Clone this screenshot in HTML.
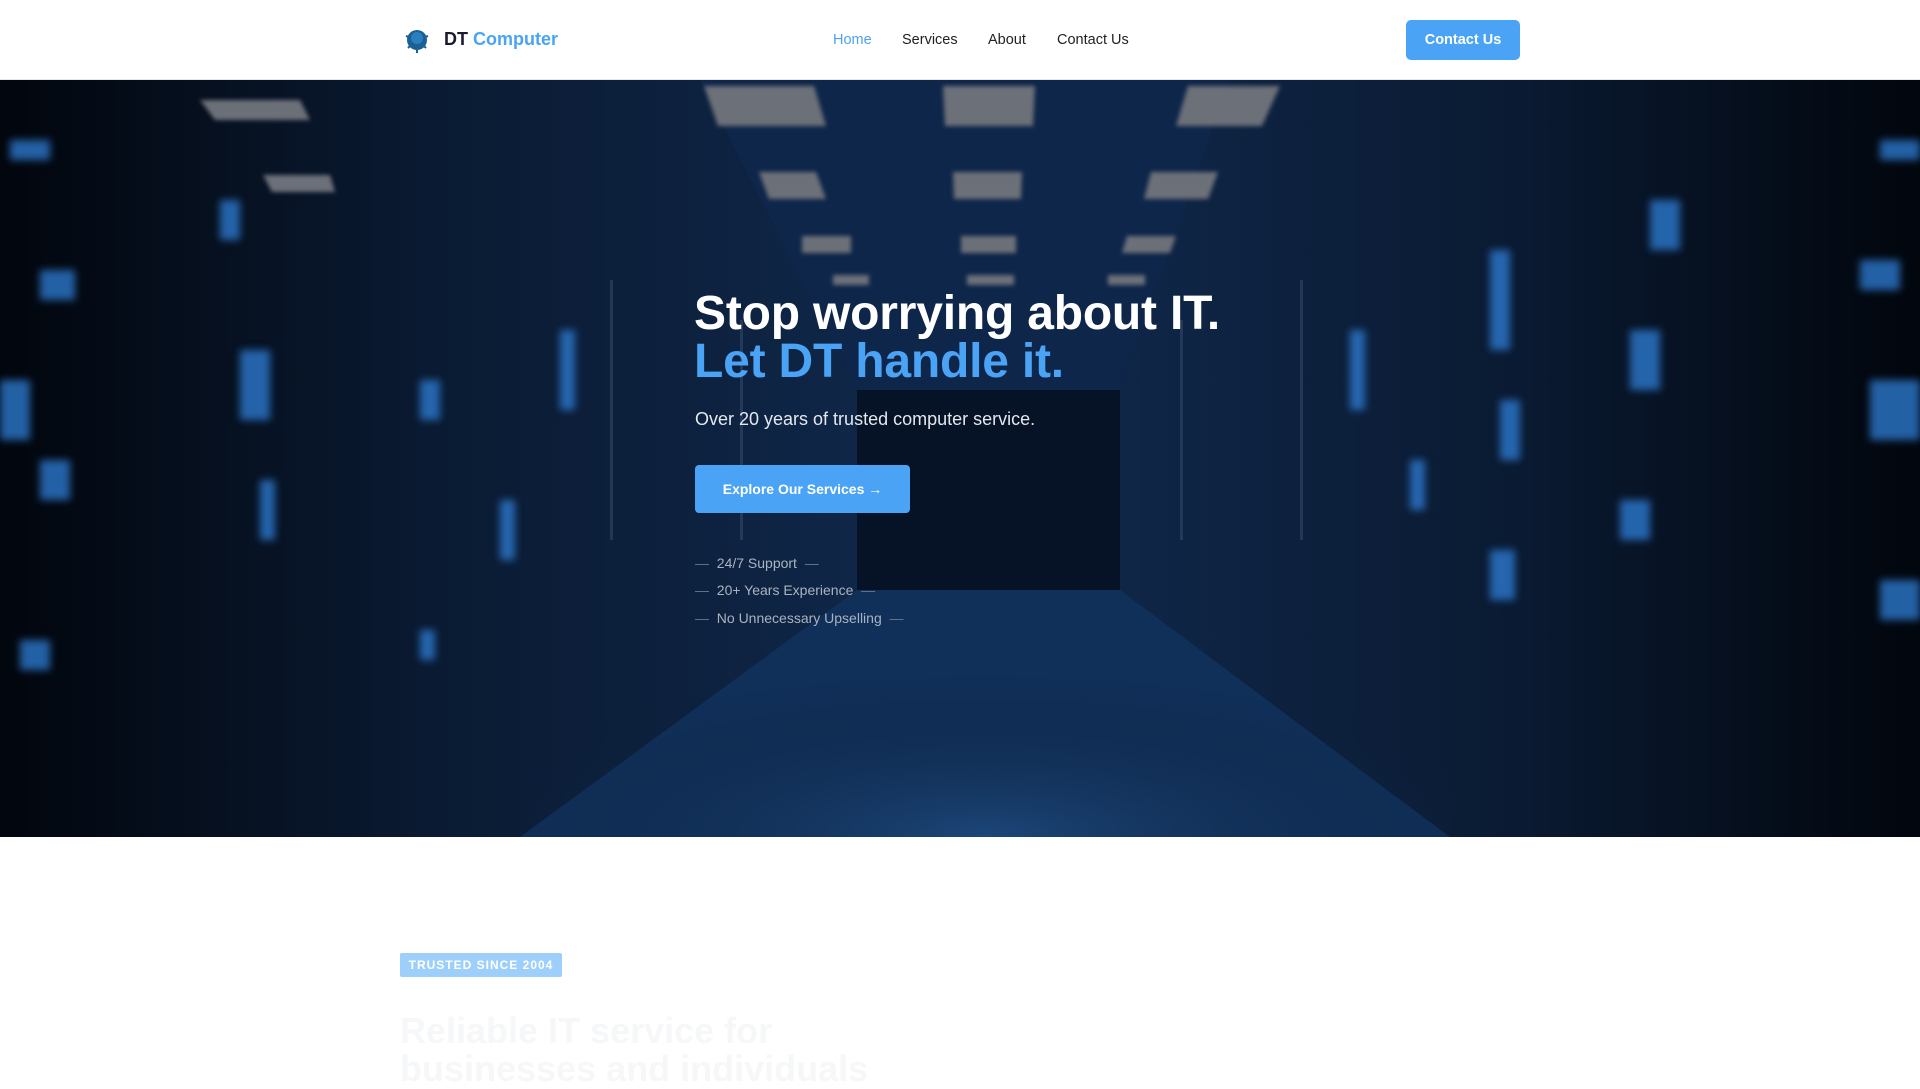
<!DOCTYPE html>
<html><head><meta charset="utf-8"><style>
*{margin:0;padding:0;box-sizing:border-box}
body{width:1920px;height:1080px;overflow:hidden;background:#fff;font-family:"Liberation Sans",sans-serif}
nav{position:absolute;top:0;left:0;width:1920px;height:80px;background:#fff;border-bottom:1px solid #e5e7eb}
.logo{position:absolute;left:404px;top:27px;width:26px;height:26px}
.brand{position:absolute;left:444px;top:29px;font-size:18px;font-weight:bold;color:#1a1a2e}
.brand span{color:#4aa3f5}
.links{position:absolute;top:32px;font-size:14.5px;color:#222}
.cbtn{position:absolute;left:1406px;top:20px;width:114px;height:40px;background:#4aa3f5;border-radius:5px;color:#fff;font-weight:bold;font-size:14.5px;text-align:center;line-height:40px}
.hero{position:absolute;top:80px;left:0;width:1920px;height:757px;overflow:hidden;background:#06101f}
.h1{position:absolute;left:694px;top:210px;font-size:48px;font-weight:bold;color:#fff;line-height:48px;letter-spacing:-0.2px}
.h1 .b{color:#4aa3f5}
.sub{position:absolute;left:695px;top:329px;font-size:18px;color:#e4e8ee}
.btn{position:absolute;left:695px;top:385px;width:215px;height:48px;background:#4aa3f5;border-radius:4px;color:#fff;font-weight:bold;font-size:14px;text-align:center;line-height:48px}
.li{position:absolute;left:695px;font-size:14px;color:#aab3c0}
.li i{font-style:normal;color:#6b7585}
.badge{position:absolute;left:400px;top:953px;width:162px;height:24px;background:#9ecffb;border-radius:2px;color:#fff;font-size:12px;font-weight:bold;letter-spacing:1px;text-align:center;line-height:24px}
.h2{position:absolute;left:400px;top:1012px;font-size:36px;font-weight:bold;color:#f6f7f8;line-height:38px}
</style></head><body>
<nav>
<svg class="logo" viewBox="0 0 26 26"><circle cx="13" cy="13" r="10" fill="#1a5f96"/><circle cx="13" cy="11" r="6" fill="#2c7fbe"/><path d="M7 18l-3 3M19 18l3 3M13 23v3M5 10l-3-1M21 10l3-1" stroke="#1a5f96" stroke-width="2"/></svg>
<div class="brand">DT <span>Computer</span></div>
<div class="links" style="left:833px;color:#4aa3f5">Home</div>
<div class="links" style="left:902px">Services</div>
<div class="links" style="left:988px">About</div>
<div class="links" style="left:1057px">Contact Us</div>
<div class="cbtn">Contact Us</div>
</nav>
<div class="hero">
<svg width="1920" height="757" style="position:absolute;left:0;top:0">
<defs>
<radialGradient id="fl" cx="0.5" cy="1" r="0.6"><stop offset="0" stop-color="#1c4679"/><stop offset="1" stop-color="#0a1a33" stop-opacity="0"/></radialGradient>
<linearGradient id="side" x1="0" x2="1"><stop offset="0" stop-color="#02060d"/><stop offset="0.5" stop-color="#0a1a32"/><stop offset="1" stop-color="#0f2647"/></linearGradient>
<linearGradient id="sider" x1="1" x2="0"><stop offset="0" stop-color="#02060d"/><stop offset="0.5" stop-color="#0a1a32"/><stop offset="1" stop-color="#0f2647"/></linearGradient>
<filter id="bl"><feGaussianBlur stdDeviation="4"/></filter>
<filter id="bl2"><feGaussianBlur stdDeviation="2"/></filter>
</defs>
<rect width="1920" height="757" fill="#0b1c37"/>
<polygon points="0,0 700,0 857,310 857,560 520,757 0,757" fill="url(#side)"/>
<polygon points="1920,0 1230,0 1120,310 1120,560 1450,757 1920,757" fill="url(#sider)"/>
<polygon points="700,0 1230,0 1120,310 857,310" fill="#0e264a"/>
<rect x="857" y="310" width="263" height="200" fill="#061225"/>
<polygon points="857,510 1120,510 1450,757 520,757" fill="#10305a"/>
<rect x="520" y="480" width="930" height="277" fill="url(#fl)"/>
<g fill="#6c7078" filter="url(#bl2)">
<polygon points="704,6 814,6 826,46 718,46"/><polygon points="943,6 1035,6 1033,46 945,46"/><polygon points="1188,6 1280,6 1262,46 1176,46"/>
<polygon points="759,92 816,92 826,119 769,119"/><polygon points="953,92 1022,92 1021,119 954,119"/><polygon points="1151,92 1218,92 1208,119 1144,119"/>
<rect x="802" y="156" width="49" height="17"/><rect x="961" y="156" width="55" height="17"/><polygon points="1127,156 1176,156 1170,173 1122,173"/>
<rect x="833" y="195" width="36" height="10"/><rect x="967" y="195" width="47" height="10"/><rect x="1108" y="195" width="37" height="10"/>
<polygon points="263,95 330,95 335,112 272,112"/><polygon points="200,20 300,20 310,40 215,40"/>
</g>
<g fill="#2f7fd8" filter="url(#bl)" opacity="0.75">
<rect x="10" y="60" width="40" height="20"/><rect x="40" y="190" width="35" height="30"/><rect x="0" y="300" width="30" height="60"/><rect x="40" y="380" width="30" height="40"/><rect x="20" y="560" width="30" height="30"/>
<rect x="220" y="120" width="20" height="40"/><rect x="240" y="270" width="30" height="70"/><rect x="260" y="400" width="15" height="60"/><rect x="420" y="300" width="20" height="40"/><rect x="420" y="550" width="15" height="30"/>
<rect x="1880" y="60" width="40" height="20"/><rect x="1860" y="180" width="40" height="30"/><rect x="1870" y="300" width="50" height="60"/><rect x="1880" y="500" width="40" height="40"/>
<rect x="1650" y="120" width="30" height="50"/><rect x="1630" y="250" width="30" height="60"/><rect x="1620" y="420" width="30" height="40"/><rect x="1490" y="170" width="20" height="100"/><rect x="1500" y="320" width="20" height="60"/><rect x="1490" y="470" width="25" height="50"/>
<rect x="1350" y="250" width="15" height="80"/><rect x="1410" y="380" width="15" height="50"/><rect x="560" y="250" width="15" height="80"/><rect x="500" y="420" width="15" height="60"/>
</g>
<g fill="#3a4e6e" opacity="0.5"><rect x="610" y="200" width="3" height="260"/><rect x="1300" y="200" width="3" height="260"/><rect x="1180" y="240" width="3" height="220"/><rect x="740" y="240" width="3" height="220"/></g>
</svg>
<div class="h1">Stop worrying about IT.<br><span class="b">Let DT handle it.</span></div>
<div class="sub">Over 20 years of trusted computer service.</div>
<div class="btn">Explore Our Services →</div>
<div class="li" style="top:475px"><i>—</i>&nbsp; 24/7 Support &nbsp;<i>—</i></div>
<div class="li" style="top:502px"><i>—</i>&nbsp; 20+ Years Experience &nbsp;<i>—</i></div>
<div class="li" style="top:530px"><i>—</i>&nbsp; No Unnecessary Upselling &nbsp;<i>—</i></div>
</div>
<div class="badge">TRUSTED SINCE 2004</div>
<div class="h2">Reliable IT service for<br>businesses and individuals</div>
</body></html>
